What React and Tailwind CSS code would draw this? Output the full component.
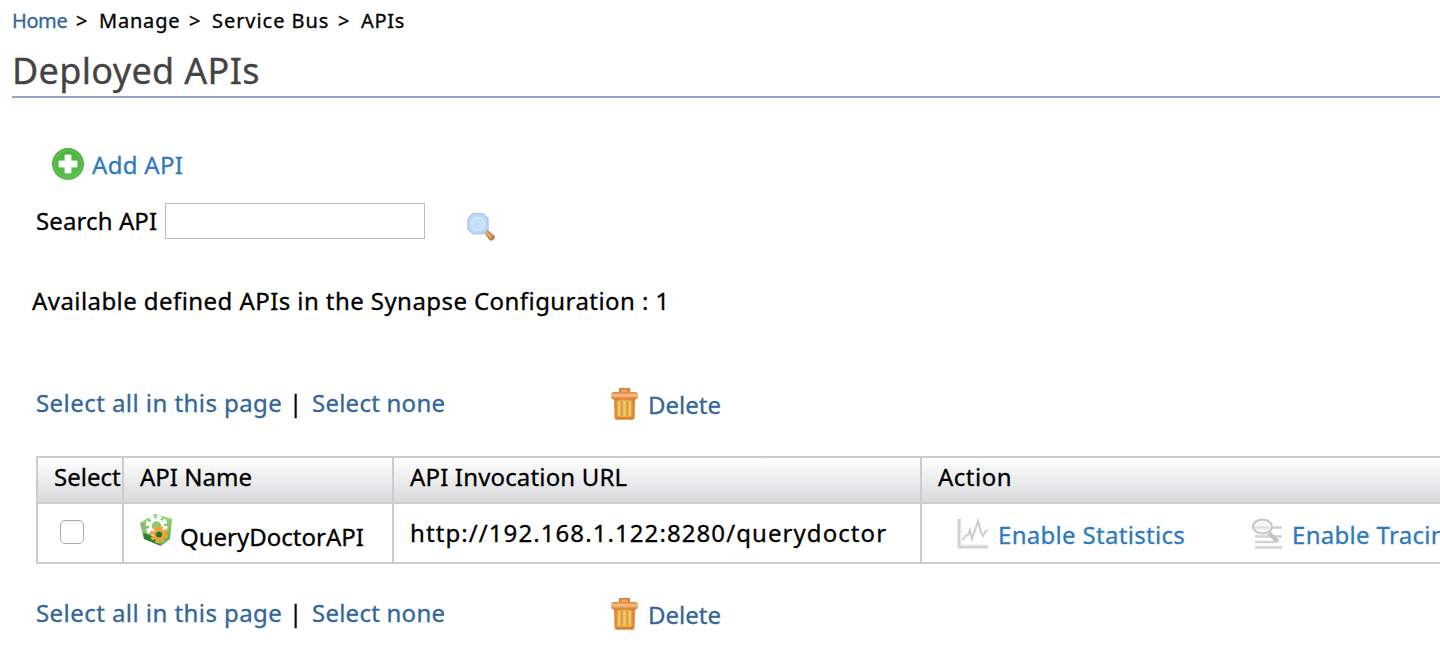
import React from "react";

function Trash() {
  return (
    <svg className="block h-8 w-7 shrink-0" viewBox="0 0 28 32">
      <defs>
        <linearGradient id="bin" x1="0" x2="1" y1="0" y2="0">
          <stop offset="0" stopColor="#d98333" />
          <stop offset=".35" stopColor="#eeb04f" />
          <stop offset=".65" stopColor="#eeb35a" />
          <stop offset="1" stopColor="#d47a2a" />
        </linearGradient>
        <linearGradient id="lid" x1="0" x2="0" y1="0" y2="1">
          <stop offset="0" stopColor="#e2822f" />
          <stop offset=".45" stopColor="#f7c48d" />
          <stop offset="1" stopColor="#d8701c" />
        </linearGradient>
      </defs>
      <path d="M8 0h11v5H8z" fill="#d9833a" />
      <path d="M10.500 1.500h6V5h-6z" fill="#eda765" />
      <path d="M3 10h21l-.5 19q0 3-3 3h-14q-3 0-3-3z" fill="url(#bin)" />
      <path d="M8 13v15M13.500 13v15M19 13v15" stroke="#efc868" strokeWidth="2.400" />
      <path d="M10.800 13v15M16.300 13v15" stroke="#d9993e" strokeWidth="1.500" />
      <path d="M4.500 30h18" stroke="#da8131" strokeWidth="2" />
      <rect x="0" y="4" width="27" height="7.500" rx="3" fill="url(#lid)" />
    </svg>
  );
}

function Plus() {
  return (
    <svg className="block size-8 shrink-0" viewBox="0 0 32 32">
      <defs>
        <linearGradient id="plus" x1="0" x2="0" y1="0" y2="1">
          <stop offset="0" stopColor="#4bb03c" />
          <stop offset="1" stopColor="#5cbd50" />
        </linearGradient>
      </defs>
      <circle cx="16" cy="16" r="16" fill="url(#plus)" />
      <circle cx="16" cy="16" r="13.500" fill="none" stroke="#62bf55" strokeWidth="1.500" />
      <path d="M13 7h6v6h6v6h-6v6h-6v-6H7v-6h6z" fill="#fff" stroke="#e4f5e1" strokeWidth="1" />
    </svg>
  );
}

function Magnifier() {
  return (
    <svg className="block h-7 w-7 shrink-0" viewBox="0 0 28 28">
      <path d="M16 18l3-2.500 8.500 7.500v3l-2 1.500h-3z" fill="#c08a4a" />
      <path d="M18.500 18.500l6 6" stroke="#deb07a" strokeWidth="2.200" />
      <path d="M23.500 27l4-4" stroke="#b57a3a" strokeWidth="1.500" />
      <path d="M6 .8h10l5 5v10l-5 5H6l-5-5v-10z" fill="#bdd8f7" stroke="#adc9ef" strokeWidth="1.600" />
      <circle cx="11" cy="11" r="6.500" fill="#c6dffa" stroke="#d6e8fc" strokeWidth="1.500" />
    </svg>
  );
}

function ApiIcon() {
  return (
    <svg className="block size-8 shrink-0" viewBox="0 0 32 32">
      <defs>
        <linearGradient id="cube" x1="0" x2="1" y1="0" y2="1">
          <stop offset="0" stopColor="#7cbb5c" />
          <stop offset=".6" stopColor="#8cc870" />
          <stop offset="1" stopColor="#4f9e48" />
        </linearGradient>
      </defs>
      <path d="M15 0L32 5L30 25L21 32L4 25L0 9z" fill="url(#cube)" />
      <path d="M3 19l9 3 9 10L4 25z" fill="#2c7d38" />
      <path d="M15 0l17 5-4 2-12-4L3 9 0 9z" fill="#9fd383" />
      <circle cx="16.500" cy="12" r="8.500" fill="none" stroke="#fff" strokeWidth="5" strokeDasharray="4.200 2.480" />
      <circle cx="16.500" cy="12" r="6.200" fill="#8fc878" stroke="#f6fbf3" strokeWidth="3" />
      <circle cx="19" cy="20.500" r="7" fill="none" stroke="#f2a43c" strokeWidth="3.500" strokeDasharray="3.400 2.100" />
      <circle cx="19" cy="20.500" r="4.600" fill="#27713a" stroke="#f3a536" strokeWidth="3" />
    </svg>
  );
}

function ChartIcon() {
  return (
    <svg className="block size-8 shrink-0" viewBox="0 0 32 32" fill="none">
      <path d="M2 1v28h29" stroke="#d2d2d2" strokeWidth="3" />
      <path d="M4 1v26h27" stroke="#e8e8e8" strokeWidth="1" />
      <path d="M6 22l2-4 3-1 2-5 2 9 3-9 3-9 3 11 2 4 2-4 3-2" stroke="#cdcdcd" strokeWidth="2" />
    </svg>
  );
}

function TraceIcon() {
  return (
    <svg className="block size-8 shrink-0" viewBox="0 0 32 32" fill="none">
      <path d="M18 9.500h13M4 18.500h27M4 24h20M4 29.500h27" stroke="#d2d2d2" strokeWidth="2.400" />
      <ellipse cx="11.500" cy="8.500" rx="9.500" ry="7" fill="#f7f7f7" stroke="#c9c9c9" strokeWidth="2.200" />
      <path d="M4 9.500h14" stroke="#dcdcdc" strokeWidth="2" />
      <path d="M18 15l9 9" stroke="#c4c4c4" strokeWidth="4" />
    </svg>
  );
}

function SelectionBar() {
  return (
    <div className="flex h-[38px] pl-9 text-[#336699]">
      <span className="w-[253px] tracking-[0.44px]">Select all in this page</span>
      <span className="w-[23px] text-black">|</span>
      <span className="w-[299px] tracking-[0.24px]">Select none</span>
      <span className="w-[37px] pt-px"><Trash /></span>
      <span className="pt-0.5">Delete</span>
    </div>
  );
}

export default function App() {
  return (
    <div className="h-[668px] w-[1440px] overflow-hidden bg-white font-['Noto_Sans',sans-serif] text-[24px] leading-8 whitespace-nowrap text-black [-webkit-text-stroke:0.3px]">
      <nav className="flex h-10 pt-[5px] pl-3 text-[20px]">
        <span className="w-[64px] tracking-[-0.4px] text-[#336699]">Home</span>
        <span className="w-[23px]">&gt;</span>
        <span className="w-[90px] tracking-[0.8px]">Manage</span>
        <span className="w-[23px]">&gt;</span>
        <span className="w-[126px] tracking-[0.95px]">Service Bus</span>
        <span className="w-[23px]">&gt;</span>
        <span className="tracking-[0.7px]">APIs</span>
      </nav>
      <h1 className="ml-3 h-[58px] border-b-2 border-[#94a6c8] pt-1.5 text-[36px] leading-[50px] tracking-[0.33px] text-[#444]">Deployed APIs</h1>
      <div className="flex h-[82px] gap-2 pt-[50px] pl-[52px] text-[#2f7abd]">
        <Plus />
        <span className="pt-px tracking-[0.3px]">Add API</span>
      </div>
      <div className="mt-[23px] flex h-10 pl-9">
        <span className="w-[129px] pt-0.5 tracking-[0.1px]">Search API</span>
        <input className="h-9 w-[260px] border border-[#bbb]" />
        <span className="pt-2.5 pl-[42px]"><Magnifier /></span>
      </div>
      <div className="mt-[42px] h-[102px] pl-8 tracking-[0.43px]">Available defined APIs in the Synapse Configuration : 1</div>
      <SelectionBar />
      <div className="mt-[31px] ml-9 grid w-[1500px] grid-cols-[86px_270px_528px_1fr] border-2 border-[#ccc]">
        <div className="col-span-4 grid h-[44px] grid-cols-subgrid bg-linear-to-b from-white to-[#d9dadc]">
          <span className="border-r-2 border-[#ccc] pt-[3px] pl-4">Select</span>
          <span className="border-r-2 border-[#ccc] pt-[3px] pl-4">API Name</span>
          <span className="border-r-2 border-[#ccc] pt-[3px] pl-4 tracking-[0.16px]">API Invocation URL</span>
          <span className="pt-[3px] pl-4 tracking-[0.5px]">Action</span>
        </div>
        <div className="col-span-4 grid h-[60px] grid-cols-subgrid border-t-2 border-[#ccc]">
          <span className="border-r-2 border-[#ccc] pt-4 pl-[22px]">
            <input type="checkbox" className="block size-6 appearance-none rounded-[5px] border border-[#aaa] bg-linear-to-b from-[#f4f4f4] to-white to-30%" />
          </span>
          <span className="flex border-r-2 border-[#ccc] pt-2.5 pl-4">
            <ApiIcon />
            <span className="pt-[7px] pl-2">QueryDoctorAPI</span>
          </span>
          <span className="border-r-2 border-[#ccc] pt-[13px] pl-4 tracking-[1.08px]">http://192.168.1.122:8280/querydoctor</span>
          <span className="flex pt-3.5 pl-[35px] text-[#2f7abd]">
            <ChartIcon />
            <span className="w-[262px] pt-px pl-[9px] tracking-[0.3px]">Enable Statistics</span>
            <TraceIcon />
            <span className="pt-px pl-[9px] tracking-[0.3px]">Enable Tracing</span>
          </span>
        </div>
      </div>
      <div className="h-[33px]" />
      <SelectionBar />
    </div>
  );
}
